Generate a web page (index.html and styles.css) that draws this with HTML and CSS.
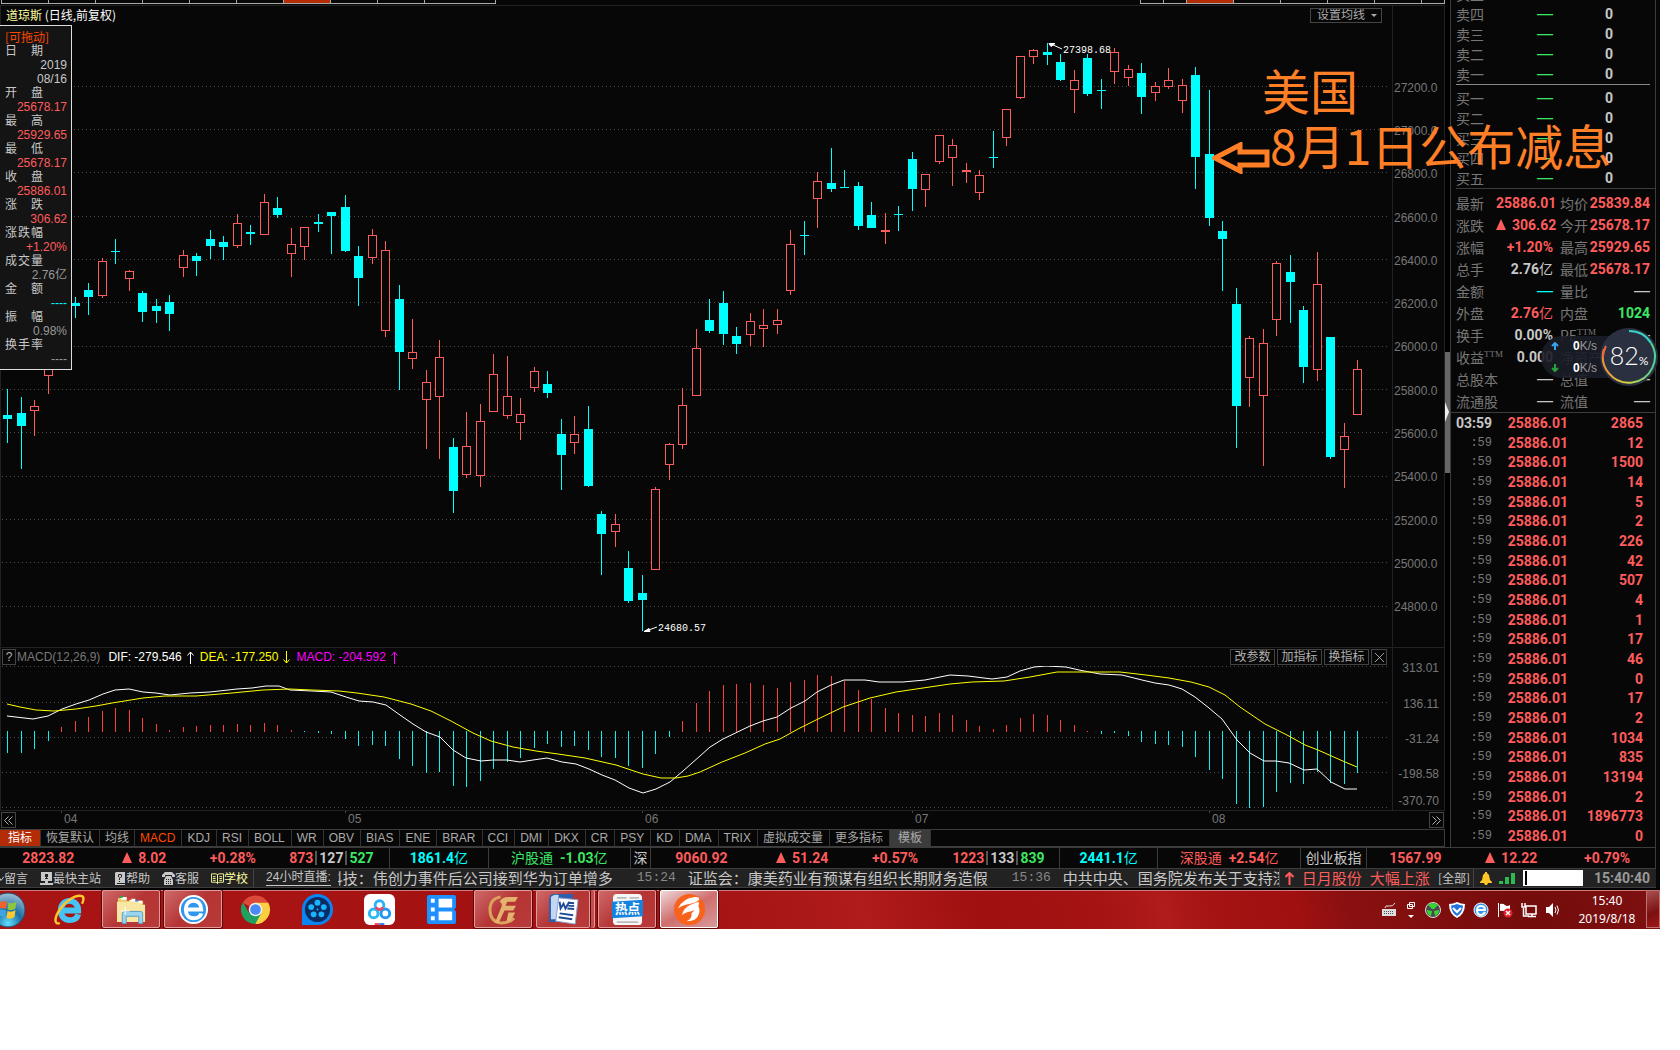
FILE: index.html
```html
<!DOCTYPE html>
<html lang="zh-CN">
  <head>
    <meta charset="UTF-8">
    <meta name="viewport" content="width=device-width, initial-scale=1.0">
    <title>道琼斯 日线</title>
    <link rel="stylesheet" href="styles.css">
    <script src="chart.js" defer></script>
  </head>
  <body>
    <div class="desktop">
      <div class="terminal">
        <main class="workspace">
          <div class="strip">
            <div class="strip-group">
              <i></i><i></i><i></i><i></i><i></i><i></i><i class="on"></i><i></i><i></i><i class="wide"></i>
            </div>
            <div class="strip-group">
              <i class="half"></i><i class="half"></i><i class="on"></i><i></i><i></i><i></i><i></i><i class="half"></i>
            </div>
          </div>

          <section class="pane price-pane">
            <div class="plot">
              <header class="plot-head">
                <h1><span class="symbol">道琼斯</span> (日线,前复权)</h1>
                <label class="ma-select">
                  <select aria-label="设置均线"><option>设置均线</option></select>
                </label>
              </header>
              <svg id="price" class="price-chart" viewBox="1 24 1391 623" preserveAspectRatio="none"></svg>
            </div>
            <ol class="price-axis">
              <li>27200.0</li><li>27000.0</li><li>26800.0</li><li>26600.0</li><li>26400.0</li>
              <li>26200.0</li><li>26000.0</li><li>25800.0</li><li>25600.0</li><li>25400.0</li>
              <li>25200.0</li><li>25000.0</li><li>24800.0</li>
            </ol>
          </section>

          <section class="pane macd-pane">
            <div class="plot">
              <header class="plot-head macd-head">
                <button class="box-btn help">?</button>
                <span class="name">MACD(12,26,9)</span>
                <span class="dif">DIF: -279.546</span>
                <svg class="arrow dif" viewBox="0 0 7 13"><path d="M3.500 13V1M.5 4.500l3-3.500 3 3.500"/></svg>
                <span class="dea">DEA: -177.250</span>
                <svg class="arrow dea" viewBox="0 0 7 13"><path d="M3.500 0v12M.5 8.500l3 3.500 3-3.500"/></svg>
                <span class="macd">MACD: -204.592</span>
                <svg class="arrow macd" viewBox="0 0 7 13"><path d="M3.500 13V1M.5 4.500l3-3.500 3 3.500"/></svg>
                <div class="plot-tools">
                  <button class="box-btn">改参数</button>
                  <button class="box-btn">加指标</button>
                  <button class="box-btn">换指标</button>
                  <button class="box-btn close" aria-label="关闭">
                    <svg viewBox="0 0 10 10"><path d="M0 0l10 10M10 0L0 10"/></svg>
                  </button>
                </div>
              </header>
              <svg id="macd" class="macd-chart" viewBox="1 0 1391 144" preserveAspectRatio="none">
                <g id="macd-bars"></g>
                <polyline class="line-dif" points="7,50 33,53 48,50 62,43 76,38 89,34 103,28 115,24 129,23 143,26 156,27 170,29 190,27 210,26 237,23 252,22 266,20 279,20 290,24 312,25 331,26 346,31 359,35 373,36 386,39 400,49 413,58 426,66 440,71 453,84 466,92 481,95 493,94 507,94 520,96 533,94 547,92 562,96 576,98 589,103 602,109 615,114 629,122 643,127 656,123 670,116 683,105 700,90 710,81 723,73 750,60 763,55 777,51 791,42 805,35 817,26 831,19 844,14 865,14 879,16 903,16 925,14 950,9 968,10 992,13 1007,11 1020,5 1034,1 1046,0 1066,1 1079,4 1100,8 1122,9 1142,14 1155,17 1169,19 1182,23 1195,31 1209,42 1222,53 1237,74 1250,87 1264,95 1276,95 1289,97 1304,104 1317,103 1331,116 1345,123 1357,123"/>
                <polyline class="line-dea" points="7,38 20,41 36,44 54,45 76,43 96,40 112,37 143,32 165,30 196,30 232,27 263,24 290,23 312,24 339,25 357,27 384,31 411,38 431,45 451,55 473,67 491,75 513,81 536,85 558,88 585,92 616,99 643,108 661,112 676,112 688,110 700,106 722,96 745,87 765,78 780,73 798,63 816,54 843,41 870,32 896,26 923,22 950,18 972,16 1004,15 1030,11 1057,6 1084,6 1120,6 1146,9 1169,12 1191,16 1209,21 1225,29 1240,41 1265,58 1287,69 1305,79 1318,84 1345,96 1357,101"/>
              </svg>
            </div>
            <ol class="macd-axis">
              <li>313.01</li><li>136.11</li><li>-31.24</li><li>-198.58</li><li>-370.70</li>
            </ol>
          </section>

          <div class="time-axis">
            <button class="box-btn" aria-label="向左"><svg viewBox="0 0 9 9"><path d="M4.500.5l-4 4 4 4M8.500.5l-4 4 4 4"/></svg></button>
            <svg class="months" viewBox="16 0 1413 18" preserveAspectRatio="none">
              <path d="M61.500 0v2M345.500 0v2M642.500 0v2M912.500 0v2M1209.500 0v2"/>
              <text x="64" y="12">04</text>
              <text x="348" y="12">05</text>
              <text x="645" y="12">06</text>
              <text x="915" y="12">07</text>
              <text x="1212" y="12">08</text>
            </svg>
            <button class="box-btn" aria-label="向右"><svg viewBox="0 0 9 9"><path d="M.5.5l4 4-4 4M4.500.5l4 4-4 4"/></svg></button>
          </div>

          <nav class="tabs">
            <button class="main">指标</button><button>恢复默认</button><button>均线</button><button class="current">MACD</button><button>KDJ</button><button>RSI</button><button>BOLL</button><button>WR</button><button>OBV</button><button>BIAS</button><button>ENE</button><button>BRAR</button><button>CCI</button><button>DMI</button><button>DKX</button><button>CR</button><button>PSY</button><button>KD</button><button>DMA</button><button>TRIX</button><button>虚拟成交量</button><button>更多指标</button><button class="template">模板</button>
          </nav>
        </main>

        <div class="splitter"><span class="thumb"></span></div>

        <aside class="quote">
          <div class="levels sell">
            <table>
              <tr><th>卖五</th><td class="dash down">—</td><td>0</td></tr>
              <tr><th>卖四</th><td class="dash down">—</td><td>0</td></tr>
              <tr><th>卖三</th><td class="dash down">—</td><td>0</td></tr>
              <tr><th>卖二</th><td class="dash down">—</td><td>0</td></tr>
              <tr><th>卖一</th><td class="dash down">—</td><td>0</td></tr>
            </table>
          </div>
          <div class="levels buy">
            <table>
              <tr><th>买一</th><td class="dash down">—</td><td>0</td></tr>
              <tr><th>买二</th><td class="dash down">—</td><td>0</td></tr>
              <tr><th>买三</th><td class="dash down">—</td><td>0</td></tr>
              <tr><th>买四</th><td class="dash down">—</td><td>0</td></tr>
              <tr><th>买五</th><td class="dash down">—</td><td>0</td></tr>
            </table>
          </div>
          <dl class="stats">
            <dt>最新</dt><dd class="up">25886.01</dd><dt>均价</dt><dd class="up">25839.84</dd>
            <dt>涨跌</dt><dd class="up"><i class="tri"></i>306.62</dd><dt>今开</dt><dd class="up">25678.17</dd>
            <dt>涨幅</dt><dd class="up">+1.20%</dd><dt>最高</dt><dd class="up">25929.65</dd>
            <dt>总手</dt><dd>2.76<small>亿</small></dd><dt>最低</dt><dd class="up">25678.17</dd>
            <dt>金额</dt><dd class="dash cyan">—</dd><dt>量比</dt><dd class="dash">—</dd>
            <dt>外盘</dt><dd class="up">2.76<small>亿</small></dd><dt>内盘</dt><dd class="down">1024</dd>
            <dt>换手</dt><dd>0.00%</dd><dt>PE<sup>TTM</sup></dt><dd class="dash">—</dd>
            <dt>收益<sup>TTM</sup></dt><dd>0.000</dd><dt>净资产</dt><dd>0.00</dd>
            <dt>总股本</dt><dd class="dash">—</dd><dt>总值</dt><dd class="dash">—</dd>
            <dt>流通股</dt><dd class="dash">—</dd><dt>流值</dt><dd class="dash">—</dd>
          </dl>
          <table class="ticks">
            <tr class="first"><th>03:59</th><td>25886.01</td><td>2865</td></tr>
            <tr><th>:59</th><td>25886.01</td><td>12</td></tr>
            <tr><th>:59</th><td>25886.01</td><td>1500</td></tr>
            <tr><th>:59</th><td>25886.01</td><td>14</td></tr>
            <tr><th>:59</th><td>25886.01</td><td>5</td></tr>
            <tr><th>:59</th><td>25886.01</td><td>2</td></tr>
            <tr><th>:59</th><td>25886.01</td><td>226</td></tr>
            <tr><th>:59</th><td>25886.01</td><td>42</td></tr>
            <tr><th>:59</th><td>25886.01</td><td>507</td></tr>
            <tr><th>:59</th><td>25886.01</td><td>4</td></tr>
            <tr><th>:59</th><td>25886.01</td><td>1</td></tr>
            <tr><th>:59</th><td>25886.01</td><td>17</td></tr>
            <tr><th>:59</th><td>25886.01</td><td>46</td></tr>
            <tr><th>:59</th><td>25886.01</td><td>0</td></tr>
            <tr><th>:59</th><td>25886.01</td><td>17</td></tr>
            <tr><th>:59</th><td>25886.01</td><td>2</td></tr>
            <tr><th>:59</th><td>25886.01</td><td>1034</td></tr>
            <tr><th>:59</th><td>25886.01</td><td>835</td></tr>
            <tr><th>:59</th><td>25886.01</td><td>13194</td></tr>
            <tr><th>:59</th><td>25886.01</td><td>2</td></tr>
            <tr><th>:59</th><td>25886.01</td><td>1896773</td></tr>
            <tr><th>:59</th><td>25886.01</td><td>0</td></tr>
          </table>
        </aside>
      </div>

      <div class="indices">
        <div class="index board">
          <span class="up">2823.82</span>
          <span class="up"><i class="tri"></i>8.02</span>
          <span class="up">+0.28%</span>
          <span><b class="up">873</b><i class="bar"></i>127<i class="bar"></i><b class="down">527</b></span>
        </div>
        <div class="index amount cyan">1861.4<small>亿</small></div>
        <div class="index connect down"><small>沪股通</small>&nbsp; -1.03<small>亿</small></div>
        <div class="index short"><small>深</small></div>
        <div class="index board shenzhen">
          <span class="up">9060.92</span>
          <span class="up"><i class="tri"></i>51.24</span>
          <span class="up">+0.57%</span>
          <span><b class="up">1223</b><i class="bar"></i>133<i class="bar"></i><b class="down">839</b></span>
        </div>
        <div class="index amount cyan">2441.1<small>亿</small></div>
        <div class="index connect up"><small>深股通</small>&nbsp; +2.54<small>亿</small></div>
        <div class="index label"><small>创业板指</small></div>
        <div class="index growth">
          <span class="up">1567.99</span>
          <span class="up"><i class="tri"></i>12.22</span>
          <span class="up">+0.79%</span>
        </div>
      </div>

      <div class="newsbar">
        <div class="links">
          <a href="#"><svg class="clip" viewBox="0 0 4 12"><path d="M0 6l1 2 3-4" fill="none" stroke="currentColor"/></svg>留言</a>
          <a href="#"><svg viewBox="0 0 13 13"><path fill="currentColor" fill-rule="evenodd" d="M1 0h11v9H8v2h5v2H0v-2h5V9H1zM5 2v3h1v1H5v1h3V6H7V5h1V2z"/></svg>最快主站</a>
          <a href="#"><svg viewBox="0 0 13 13"><path fill="currentColor" fill-rule="evenodd" d="M3 0h9v11H4v1h8v1H2V1zM5 3v2h1V3h2v2H7L6 6v2h1V6l2-1V3L8 2H6zM6 9v1h1V9z"/></svg>帮助</a>
          <a href="#"><svg viewBox="0 0 13 13"><path fill="currentColor" d="M0 3l3-3h7l3 3v2h-3V3H3v2H0zM4 4h5l2 4v5H2V8z"/><path stroke="#222" stroke-dasharray="1 1" d="M4 7.500h5M4 9.500h5M4 11.500h5"/></svg>客服</a>
          <a href="#" class="school"><svg viewBox="0 0 14 13"><path fill="none" stroke="currentColor" d="M.5 1.500h5l1.500 1 1.500-1h5v9h-5L7 12l-1.500-1.500h-5zM7 2v10M2 4.500h3M2 6.500h3M2 8.500h3M9 4.500h3M9 6.500h3M9 8.500h3"/></svg>学校</a>
        </div>
        <div class="news">
          <a href="#" class="live">24小时直播:</a>
          <div class="marquee">
            <span class="item lead">科技：伟创力事件后公司接到华为订单增多</span>
            <time>15:24</time>
            <span class="item">证监会：康美药业有预谋有组织长期财务造假</span>
            <time>15:36</time>
            <span class="item">中共中央、国务院发布关于支持深圳</span>
          </div>
        </div>
        <div class="alert">
          <svg viewBox="0 0 9 13"><path d="M4.500 13V1M.5 5l4-4 4 4" fill="none" stroke="currentColor" stroke-width="2"/></svg>
          <span>日月股份</span><span>大幅上涨</span>
          <a href="#">[全部]</a>
        </div>
        <div class="status">
          <svg class="bell" viewBox="0 0 12 13"><path fill="#ffc629" d="M5 0h2v1l2 2 1 5 2 2v1H0v-1l2-2 1-5 2-2zM4 11h4l-1 2H5z"/></svg>
          <svg class="signal" viewBox="0 0 17 12"><path fill="#2cbb52" d="M0 9h4v3H0zM6 5h4v7H6zM12 1h4v11h-4z"/></svg>
          <input type="text" aria-label="搜索">
          <time>15:40:40</time>
        </div>
      </div>

      <footer class="taskbar">
        <button class="orb" aria-label="开始">
          <svg viewBox="0 0 36 36">
            <defs><radialGradient id="orb" cx=".5" cy=".9" r=".9"><stop offset="0" stop-color="#5fe0ff"/><stop offset=".45" stop-color="#1c6ea4"/><stop offset="1" stop-color="#9fc0d6"/></radialGradient></defs>
            <circle cx="18" cy="18" r="17" fill="url(#orb)" stroke="#244a66"/>
            <path fill="#f0622d" d="M9 11q4-3 8-1l-1 7q-4-2-8 0z"/><path fill="#8cc63e" d="M18.500 10.500q4 2 8-1l-1 7q-4 3-8 1z"/>
            <path fill="#3fa4e0" d="M8 18.500q4-2 8 0l-1 7q-4-3-8 0z"/><path fill="#fcc92e" d="M17.500 19q4 2 8-1l-1 7q-4 3-8 1z"/>
          </svg>
        </button>
        <div class="tasks">
          <button aria-label="Internet Explorer">
            <svg viewBox="0 0 32 32"><path fill="none" stroke="#46c4f3" stroke-width="6" d="M25 21c-1 4-4 6-9 6-5 0-9-4-9-10s4-10 9-10 9 4 9 10H10"/><path fill="none" stroke="#ffc62b" stroke-width="2.500" d="M6 30c-6 2-6-5 0-14S22 1 28 2c3 0 3 4 1 8"/></svg>
          </button>
          <button class="open" aria-label="资源管理器">
            <svg viewBox="0 0 32 32"><path fill="#e9ca6b" d="M2 4h9v3h17v22H2z"/><path fill="#fff" d="M5 3h6v3H5zM14 5h6v3h-6zM21 7h6v3h-6z"/><path fill="#1fae3a" d="M4 2h3v2H4z"/><path fill="#e33a22" d="M13 4h3v2h-3z"/><path fill="#2f87e0" d="M20 6h3v2h-3z"/><path fill="#f8e7a2" d="M1 8h22l3 3h4v18H1z"/><path fill="#9bd4ee" stroke="#5b9fc4" d="M6.500 30.500V20q0-2 2-2h17q2 0 2 2v10.500h-4V23h-13v7.500z"/><path stroke="#fff" d="M9.500 13v8M5 17.500h9"/></svg>
          </button>
          <button class="open" aria-label="浏览器">
            <svg viewBox="0 0 32 32"><circle cx="16" cy="16" r="15" fill="#fff"/><circle cx="16" cy="16" r="13" fill="#2f97ee"/><path fill="none" stroke="#fff" stroke-width="4" d="M24 20c-1 4-4 5-8 5-5 0-8-4-8-9s3-9 8-9 8 4 8 9H9"/></svg>
          </button>
          <button aria-label="Chrome">
            <svg viewBox="0 0 32 32"><path fill="#de4a3a" d="M16 16L3 9a15 15 0 0 1 26 0z"/><path fill="#fcce41" d="M16 16V9h13.300A15 15 0 0 1 16 31z"/><path fill="#1da262" d="M3 8.500L16 31A15 15 0 0 1 3 8.500z"/><path fill="#1da262" d="M9 19l7 2 6-1-6 11z"/><path fill="#fcce41" d="M22 20l-6 11 5-1 6-8z"/><circle cx="16" cy="16" r="7" fill="#f1f1f1"/><circle cx="16" cy="16" r="5.500" fill="#4a8af4"/></svg>
          </button>
          <button aria-label="影音">
            <svg viewBox="0 0 32 32"><path fill="#0a86f2" d="M0 32V16A16 16 0 1 1 16 32z"/><circle cx="16" cy="16" r="13" fill="#0b2c63"/><g fill="#18b4ff"><circle cx="16" cy="9" r="3"/><circle cx="22.500" cy="13.500" r="3"/><circle cx="20" cy="21" r="3"/><circle cx="12" cy="21" r="3"/><circle cx="9.500" cy="13.500" r="3"/><circle cx="16" cy="16" r="1"/></g></svg>
          </button>
          <button aria-label="网盘">
            <svg viewBox="0 0 32 32"><rect width="32" height="32" rx="6" fill="#fff"/><g fill="none" stroke-width="3"><circle cx="10" cy="20" r="4.500" stroke="#28b9f5"/><circle cx="22" cy="20" r="4.500" stroke="#2196f3"/><circle cx="16" cy="11.500" r="4.500" stroke="#2ab4f6"/><path stroke="#ea4b66" d="M12 14q4 4 8 0"/></g><path fill="#f0455f" d="M11 30h5v2h-5z"/><path fill="#2d7df0" d="M16 30h5v2h-5z"/></svg>
          </button>
          <button aria-label="视频">
            <svg viewBox="0 0 32 32"><path fill="#1e90ff" d="M1 3q0-2 2-2h26q2 0 2 2v11l-2 2 2 2v11q0 2-2 2H3q-2 0-2-2z"/><path fill="#fff" d="M5 5h4v4H5zM5 14h4v4H5zM5 23h4v4H5zM13 5h14v9H13zM13 18h14v9H13z"/></svg>
          </button>
          <button class="open" aria-label="理财">
            <svg viewBox="0 0 32 32"><path fill="none" stroke="#d9a35a" stroke-width="3" d="M13 3Q2 5 2 16q0 13 12 14 8 0 13-5"/><path fill="#e3b26c" d="M12 8q2-5 9-5h10l-3 5h-8l-2 4h11l-3 5h-9l-6 13H7l7-17q1-4-2-5zM21 19h7l-4 8-5 2z"/></svg>
          </button>
          <button class="open stacked" aria-label="Word">
            <svg viewBox="0 0 32 32"><path fill="#2d5fae" d="M4 0h22l-3 29H1V8q0-6 3-8z"/><path fill="#c3d6f2" d="M3 3q3-3 8-2L9 26H3z"/><path fill="#fff" stroke="#8aa3cc" d="M11 4l20 2-3 25-20-3z"/><g fill="none" stroke="#1f4a96" stroke-width="2"><path d="M12 8l1 7 3-5 2 5 4-7M22 9l5 .5M21 12l6 .5M20 15l7 .5M12 20l14 2M11 24l14 2"/></g></svg>
          </button>
          <button class="open" aria-label="热点">
            <svg viewBox="0 0 32 32"><rect x="1" width="30" height="32" rx="4" fill="#f6f6f6"/><path fill="#bcbcbc" d="M5 3h10v2H5zM18 3h10v2H18zM5 28h22v2H5z"/><path fill="#1583dd" d="M0 8l32-2v17l-32 2z"/><text class="hot" x="16" y="20">热点</text></svg>
          </button>
          <button class="open active" aria-label="行情">
            <svg viewBox="0 0 32 32"><circle cx="16" cy="16" r="16" fill="#f9621a"/><path fill="#fff" d="M4 15Q9 4 22 3q5 0 4 3-3 3-9 4-8 1-13 5zM8 22q2-8 9-11l8-3q2 2-1 6-2 3-7 4-6 1-9 4zM13 28q6-3 5-8l7-8q3 6-1 12-3 4-11 4z"/></svg>
          </button>
        </div>
        <div class="tray">
          <svg viewBox="0 0 16 16"><path fill="#ddd" d="M1 7h14v7H1z"/><path stroke="#555" stroke-dasharray="1 1" d="M3 9.500h10M3 11.500h10"/><path fill="none" stroke="#ddd" d="M4 6q0-3 4-2t6-3"/></svg>
          <svg class="slim" viewBox="0 0 8 18"><path fill="none" stroke="#fff" d="M2.500 1.500h5v4h-5zM.5 3.500h5v4h-5z"/><path fill="#fff" d="M1 14h6l-3 3z"/></svg>
          <svg viewBox="0 0 16 16"><circle cx="8" cy="8" r="7.500" fill="#4a4a4a" stroke="#ddd"/><path fill="#35d435" d="M7 7L3 3q5-4 10 0L9 7zM7 9l-5-1q0 5 4 6zM9 9l5-1q0 5-4 6z"/></svg>
          <svg viewBox="0 0 16 16"><path fill="#fff" d="M8 0q4 2 8 2 0 10-8 14Q0 12 0 2q4 0 8-2z"/><path fill="#2273e0" d="M8 2q3 1 6 1.500Q13.500 11 8 14 2.500 11 2 3.500 5 3 8 2z"/><path fill="none" stroke="#fff" stroke-width="2" d="M4 6l4 4 4-4"/></svg>
          <svg viewBox="0 0 16 16"><circle cx="8" cy="8" r="7" fill="#2f97ee" stroke="#fff"/><path fill="none" stroke="#fff" stroke-width="2" d="M12 10c-1 2-2 3-4 3-3 0-4-2-4-5s2-4 4-4 4 1 4 4H4"/></svg>
          <svg viewBox="0 0 16 16"><path fill="#fff" d="M1 1h1v14H1zM3 2q3-1 5 1t5 0v7q-3 2-5 0T3 9z"/><circle cx="11" cy="11" r="4.500" fill="#e2202c"/><path stroke="#fff" stroke-width="1.500" d="M9 9l4 4M13 9l-4 4"/></svg>
          <svg viewBox="0 0 16 16"><path fill="none" stroke="#fff" stroke-width="1.500" d="M5 4h10v8H5zM2.500 6v8H8M1 1v4h3V1M11 12v2M7 14.500h8"/></svg>
          <svg viewBox="0 0 16 16"><path fill="#fff" d="M1 5h3l4-4v14l-4-4H1z"/><path fill="none" stroke="#fff" d="M10 5q2 3 0 6M12 3.500q3 4.500 0 9"/></svg>
        </div>
        <time class="clock"><span>15:40</span><span>2019/8/18</span></time>
        <button class="show-desktop" aria-label="显示桌面"></button>
      </footer>

      <dl class="info">
        <div class="grip">[可拖动]</div>
        <dt>日 期</dt><dd class="date">2019<br>08/16</dd>
        <dt>开 盘</dt><dd class="up">25678.17</dd>
        <dt>最 高</dt><dd class="up">25929.65</dd>
        <dt>最 低</dt><dd class="up">25678.17</dd>
        <dt>收 盘</dt><dd class="up">25886.01</dd>
        <dt>涨 跌</dt><dd class="up">306.62</dd>
        <dt>涨跌幅</dt><dd class="up">+1.20%</dd>
        <dt>成交量</dt><dd>2.76亿</dd>
        <dt>金 额</dt><dd class="cyan">----</dd>
        <dt>振 幅</dt><dd>0.98%</dd>
        <dt>换手率</dt><dd>----</dd>
      </dl>

      <div class="note">
        <p>美国</p>
        <p class="second">8月1日公布减息</p>
        <svg viewBox="0 0 58 32"><path d="M3 16L28 3v7h27v13H28v6z"/></svg>
      </div>

      <div class="net">
        <div class="rates">
          <span><svg viewBox="0 0 8 8"><path stroke="#38a3e8" d="M4 8V1M1 4l3-3 3 3"/></svg><b>0</b>K/s</span>
          <span><svg viewBox="0 0 8 8"><path stroke="#2aa336" d="M4 0v7M1 4l3 3 3-3"/></svg><b>0</b>K/s</span>
        </div>
        <div class="gauge">
          <svg viewBox="0 0 60 60">
            <defs><linearGradient id="ring" x1="0" y1="0" x2="1" y2="0"><stop offset="0" stop-color="#f0913c"/><stop offset=".45" stop-color="#d8d23c"/><stop offset="1" stop-color="#4cd39a"/></linearGradient></defs>
            <circle cx="30" cy="30" r="29" fill="#2b3040"/>
            <path fill="none" stroke="#37d3c4" stroke-width="2" d="M30 4a26 26 0 0 1 22 12"/>
            <path fill="none" stroke="url(#ring)" stroke-width="2" d="M52 16A26 26 0 1 1 5 22"/>
            <path fill="none" stroke="#f0633c" stroke-width="2" d="M4 30A26 26 0 0 1 7 19"/>
          </svg>
          <strong>82<small>%</small></strong>
        </div>
      </div>
    </div>
  </body>
</html>
```
FILE: styles.css
```css
*,
*::after,
*::before {
  box-sizing: border-box;
}

:root {
  --cjk: "Noto Sans CJK SC", sans-serif;
  --text: "Liberation Sans", "Noto Sans CJK SC", sans-serif;
  --num: Roboto, "Noto Sans CJK SC", sans-serif;
  --mono: "Liberation Mono", "Noto Sans CJK SC", monospace;
  --up: #ff5c5c;
  --down: #3de663;
  --cyan: #00ffff;
  --edge: #222;
  --line: #3c3c3c;
}

body {
  margin: 0;
  padding-right: 20px;
  background: #fff;
  font: 12px/14px var(--text);
  color: #c8c8c8;
}

button,
input,
select {
  font: inherit;
  color: inherit;
  margin: 0;
  padding: 0;
  border: 0;
  border-radius: 0;
  background: none;
}

dl,
dd,
ol,
p,
h1 {
  margin: 0;
  padding: 0;
}

ol {
  list-style: none;
}

a {
  color: inherit;
  text-decoration: none;
}

svg {
  display: block;
}

i {
  font-style: normal;
}

.up { color: var(--up); }
.down { color: var(--down); }
.cyan { color: var(--cyan); }

.desktop {
  position: relative;
  background: #070707;
}

.terminal {
  display: grid;
  grid-template-columns: 1fr 5px 206px;
  padding-right: 4px;
}

/* Cut-off period tabs */
.strip {
  display: flex;
  justify-content: space-between;
  height: 5px;
  padding: 0 0 1px 1px;
}

.strip-group {
  display: flex;
  border-left: 1px solid #aaa;
}

.strip-group i {
  width: 47px;
  border: 1px solid #aaa;
  border-width: 0 1px 1px 0;
}

.strip-group .half { width: 23px; }
.strip-group .wide { width: 71px; }
.strip-group .on { background: #b42c06; }

/* Chart panes */
.pane {
  display: grid;
  grid-template-columns: 1fr 52px;
  border: 1px solid var(--edge);
  border-bottom: 0;
}

.plot-head {
  display: flex;
  align-items: center;
  height: 18px;
  padding: 0 10px 0 5px;
}

.plot-head h1 {
  flex: 1;
  font: 12px/14px var(--cjk);
  color: #fff;
}

.plot-head .symbol {
  color: #ffffa0;
}

.ma-select {
  position: relative;
  border: 1px solid #444;
}

.ma-select select {
  appearance: none;
  display: block;
  width: 70px;
  height: 13px;
  padding: 0 0 0 6px;
  line-height: 13px;
  color: #aaa;
}

.ma-select::after {
  content: "";
  position: absolute;
  right: 4px;
  top: 5px;
  border: 3px solid transparent;
  border-top-color: #aaa;
}

.price-chart {
  width: 100%;
  height: 623px;
}

.macd-chart {
  width: 100%;
  height: 144px;
}

.price-chart line,
.macd-chart line {
  stroke: #4e4e4e;
  stroke-dasharray: 1 3;
}

.price-chart rect,
.macd-chart rect,
.price-chart line,
.macd-chart line,
.months path {
  shape-rendering: crispEdges;
}

.body-up {
  stroke: var(--up);
  fill: #070707;
}

.wick-up { fill: var(--up); }

.body-down,
.wick-down {
  fill: var(--cyan);
}

.bar-up { fill: #ff3c3c; }
.bar-down { fill: #0cf0f0; }

.price-chart text {
  font: 10px var(--mono);
  fill: #fff;
}

.price-chart .pointer {
  fill: #fff;
  stroke: #fff;
}

.line-dif,
.line-dea {
  fill: none;
  stroke: #fff;
}

.line-dea {
  stroke: #ff0;
}

.price-axis,
.macd-axis {
  display: grid;
  grid-auto-rows: 1fr;
  align-items: center;
  border-left: 1px solid var(--edge);
  color: #777;
}

.price-axis {
  padding: 60px 0 18px 1px;
}

.macd-axis {
  grid-template-rows: 36px 36px 34px 36px 18px;
  align-content: start;
  padding: 2px 5px 0 0;
  text-align: right;
}

.macd-head {
  padding: 0 5px 0 1px;
}

.macd-head .name {
  margin: 0 8px 0 1px;
  color: #777;
}

.macd-head .dif { color: #fff; }
.macd-head .dea { color: #ff0; }
.macd-head .macd { color: #f0f; }

.arrow {
  width: 7px;
  height: 13px;
  margin: 0 6px 0 5px;
  fill: none;
  stroke: currentColor;
}

.plot-tools {
  display: flex;
  gap: 2px;
  margin-left: auto;
}

.box-btn {
  display: grid;
  place-items: center;
  height: 16px;
  border: 1px solid #444;
  line-height: 14px;
  color: #b0b0b0;
}

.plot-tools .box-btn {
  width: 45px;
}

.box-btn.help {
  width: 14px;
}

.plot-tools .close {
  width: 16px;
}

.box-btn svg {
  width: 9px;
  height: 9px;
  fill: none;
  stroke: currentColor;
}

.time-axis {
  display: grid;
  grid-template-columns: 15px 1fr 15px;
  height: 19px;
  padding: 0 1px;
  border-top: 1px solid var(--edge);
}

.time-axis .box-btn {
  margin-top: 1px;
}

.months {
  width: 100%;
  height: 18px;
  font: 12px var(--text);
  fill: #777;
}

.months path {
  stroke: #444;
}

.tabs {
  display: flex;
  height: 18px;
  border: 1px solid var(--line);
  border-left: 0;
}

.tabs button {
  padding: 0 5px;
  border-right: 1px solid #333;
  line-height: 16px;
  color: #aaa;
}

.tabs .current,
.tabs .current ~ button {
  padding-right: 6px;
}

.tabs .main {
  padding: 0 8px;
  background: #b42c06;
  color: #fff;
}

.tabs .current {
  color: #ff4800;
}

.tabs .current ~ .template {
  padding: 0 8px;
  background: #3c3c3c;
}

.splitter {
  position: relative;
  background: #000;
}

.splitter .thumb {
  position: absolute;
  top: 352px;
  width: 100%;
  height: 121px;
  background: #666;
}

.splitter .thumb::after {
  content: "";
  position: absolute;
  left: 0;
  top: 50px;
  border: 10px solid transparent;
  border-width: 10px 0 10px 4px;
  border-left-color: #eee;
}

/* Quote column */
.quote {
  display: grid;
  grid-template-rows: 85px 104px 224px 1fr;
  border: 1px solid var(--line);
  border-width: 0 1px;
}

.levels {
  display: flex;
  flex-direction: column;
  justify-content: flex-end;
  overflow: hidden;
  margin: 0 5px;
}

.sell {
  border-bottom: 1px solid #888;
}

.buy {
  margin-right: 0;
  border-bottom: 1px solid var(--line);
}

.quote table {
  border-collapse: collapse;
  table-layout: fixed;
  width: 157px;
  font: bold 14px/18px var(--num);
}

.quote td,
.quote th {
  padding: 0;
  text-align: right;
}

.levels tr {
  height: 20px;
}

.levels th {
  width: 50px;
  font: 14px/18px var(--cjk);
  color: #777;
}

.quote .levels th {
  text-align: left;
}

.levels td {
  width: 60px;
}

.levels td:nth-child(2) {
  width: 47px;
}

.stats {
  display: grid;
  grid-template-columns: 40px 57px 7px 27px 63px;
  grid-auto-rows: 22px;
  align-items: center;
  padding: 3px 5px 0;
  border-bottom: 1px solid var(--line);
  font: bold 14px/20px var(--num);
}

.stats dt {
  font: 14px/20px var(--cjk);
  color: #777;
  white-space: nowrap;
}

.stats dt:nth-of-type(even) {
  grid-column: 4;
}

.stats dd {
  text-align: right;
  white-space: nowrap;
}

.quote .dash {
  font: 16px/18px var(--text);
}

.stats sup {
  font: 9px/10px "Liberation Serif", serif;
  vertical-align: 6px;
}

small {
  font: 14px/14px var(--cjk);
}

.tri {
  display: inline-block;
  margin-right: 6px;
  border: 5px solid transparent;
  border-width: 0 5px 11px;
  border-bottom-color: currentColor;
}

.quote .ticks {
  width: 187px;
  height: 433px;
  margin-left: 5px;
  color: var(--up);
}

.ticks th {
  width: 36px;
  font: 12px/18px var(--mono);
  color: #777;
}

.ticks .first th {
  font: bold 14px/18px var(--num);
  color: #c8c8c8;
}

.ticks td:nth-child(2) {
  width: 76px;
}

/* Index bar */
.indices {
  display: flex;
  height: 22px;
  margin-right: 4px;
  border: 1px solid var(--line);
  border-left: 0;
  font: bold 14px/20px var(--num);
  text-align: center;
  white-space: nowrap;
}

.index {
  border-left: 1px solid var(--line);
}

.index:first-child {
  border-left: 0;
}

.board {
  display: grid;
  grid-template-columns: 97fr 96fr 82fr 116fr;
  flex: 391;
}

.shenzhen {
  flex: 410;
}

.board b {
  font-weight: bold;
}

.index .bar {
  display: inline-block;
  width: 2px;
  height: 14px;
  margin: 0 2px;
  background: #555;
  vertical-align: -2px;
}

.amount { flex: 98; }
.connect { flex: 142; }
.short { flex: 19; }
.label { flex: 66; }

.growth {
  display: grid;
  grid-template-columns: 1fr 1fr 1fr;
  flex: 289;
}

/* News bar */
.newsbar {
  display: flex;
  height: 19px;
  margin-right: 4px;
  border-bottom: 1px solid var(--line);
  background: #222;
  line-height: 18px;
}

.links {
  display: flex;
  gap: 12px;
  padding-right: 5px;
  border-right: 1px solid #444;
  font-family: var(--cjk);
}

.links a {
  display: flex;
  align-items: center;
}

.links svg {
  width: 13px;
  height: 13px;
}

.links .clip {
  width: 4px;
}

.links .school {
  color: #ffffa0;
}

.news {
  display: flex;
  flex: 1;
  min-width: 0;
  padding-left: 12px;
}

.live {
  height: 17px;
  margin-right: 7px;
  border-bottom: 1px solid #c8c8c8;
  line-height: 17px;
  white-space: nowrap;
}

.marquee {
  display: flex;
  flex: 1;
  gap: 12px;
  overflow: hidden;
  white-space: nowrap;
}

.marquee .item {
  font: 15px/18px var(--cjk);
}

.marquee .lead {
  margin: 0 12px 0 -10px;
}

.marquee time {
  font: 13px/18px var(--mono);
  color: #888;
}

.marquee .item + time:not(:nth-child(2)) {
  margin-left: 12px;
}

.alert {
  display: flex;
  align-items: center;
  gap: 8px;
  padding: 0 3px 0 5px;
  border: 1px solid #444;
  border-width: 0 1px;
  font: 15px/18px var(--cjk);
  color: var(--up);
}

.alert svg {
  width: 9px;
  height: 13px;
}

.alert a {
  font-size: 12px;
  color: #c8c8c8;
}

.status {
  display: flex;
  align-items: center;
  gap: 7px;
  width: 182px;
  padding: 0 6px;
}

.bell {
  width: 12px;
  height: 13px;
}

.signal {
  width: 17px;
  height: 12px;
}

.status input {
  width: 60px;
  height: 16px;
  border-left: 2px solid #fff;
  background: linear-gradient(#000, #000) 0 center / 2px 14px no-repeat #fff;
}

.status time {
  margin-left: auto;
  font: bold 14px/18px var(--num);
  color: #999;
}

/* Taskbar */
.taskbar {
  display: flex;
  height: 41px;
  padding-left: 40px;
  border-top: 2px solid #000;
  background: linear-gradient(75deg, #a81414 0 18%, #a01010 34%, #a81616 46%, #b01b1b 52%, #a01010 59%, #a51313 66%, #b01b1b 70%, #a51313 73%, #a01010 78%, #8a1010 81%, #740c0c 92%, #7e1010);
  box-shadow: inset 0 1px #d37b7b;
  position: relative;
  overflow: hidden;
}

.orb {
  position: absolute;
  left: -10px;
  top: 2px;
}

.orb svg {
  width: 36px;
  height: 36px;
}

.tasks {
  display: flex;
  flex: 1;
  gap: 4px;
}

.tasks button {
  display: grid;
  place-items: center;
  width: 58px;
  height: 38px;
}

.tasks svg {
  width: 31px;
  height: 31px;
}

.tasks .open {
  border: 1px solid #e29a9a;
  border-radius: 2px;
  background: linear-gradient(135deg, #cf6a6a, #b53434 50%, #b93a3a);
  box-shadow: 0 0 0 1px #5c0808;
}

.tasks .stacked {
  width: 54px;
  margin-right: 4px;
  box-shadow: 1px 0 #5c0808, 4px 0 #c05050, 5px 0 #e29a9a;
}

.tasks .active {
  border-color: #fff;
  background: linear-gradient(150deg, #f0d8d8, #cf6e6e 50%, #d99a9a);
}

.hot {
  font: bold 13px var(--cjk);
  fill: #fff;
  text-anchor: middle;
}

.tray {
  display: flex;
  align-items: center;
  gap: 8px;
}

.tray svg {
  width: 16px;
  height: 16px;
}

.tray .slim {
  width: 8px;
  height: 18px;
  margin: 0 2px;
}

.clock {
  display: flex;
  flex-direction: column;
  justify-content: center;
  width: 85px;
  padding-left: 7px;
  font: 12px/18px "Noto Sans", sans-serif;
  color: #fff;
  text-align: center;
}

.show-desktop {
  width: 14px;
  height: 38px;
  border: 1px solid #c07070;
  background: linear-gradient(160deg, #a85050, #7c1010 60%, #a01818);
}

/* Floating data window */
.info {
  position: absolute;
  left: 0;
  top: 25px;
  width: 72px;
  height: 345px;
  padding: 4px 4px 0 5px;
  border: 1px solid #ddd;
  border-left: 0;
  background: #141414;
}

.info .grip {
  font: 12px/14px var(--cjk);
  color: #ff4800;
}

.info dt {
  width: 38px;
  font: 12px/12px var(--cjk);
  text-align-last: justify;
}

.info dd {
  padding-top: 2px;
  text-align: right;
}

.info dd:not([class]) {
  color: #999;
}

/* Drawn note over the chart */
.note {
  position: absolute;
  left: 1262px;
  top: 62px;
  font: 48px/55px var(--cjk);
  color: #ff7f27;
  white-space: nowrap;
}

.note .second {
  padding-left: 8px;
}

.note svg {
  position: absolute;
  left: -50px;
  top: 80px;
  width: 58px;
  height: 32px;
  fill: none;
  stroke: #ff7f27;
  stroke-width: 5;
}

/* Network speed widget */
.net {
  position: absolute;
  left: 1541px;
  top: 327px;
  display: flex;
  align-items: center;
}

.rates {
  display: grid;
  gap: 4px;
  width: 76px;
  height: 42px;
  padding: 1px 0 1px 10px;
  border-radius: 21px 0 0 21px;
  background: rgba(27, 29, 40, .9);
  color: #999;
}

.rates span {
  display: flex;
  align-items: center;
}

.rates b {
  margin-left: 14px;
  font-weight: bold;
  color: #fff;
}

.rates svg {
  width: 8px;
  height: 8px;
  fill: none;
  stroke-width: 2;
}

.gauge {
  position: relative;
  width: 60px;
  height: 60px;
  margin-left: -18px;
}

.gauge strong {
  position: absolute;
  inset: 0;
  font: 300 25px/56px Lato, sans-serif;
  color: #fff;
  text-align: center;
}

.gauge small {
  font: 12px Lato, sans-serif;
}
```
FILE: chart.js
```js
// direction, high, body top, body bottom, low
const candles = `
d 389 415 419 443|d 397 413 426 469|u 400 406 411 436|u 350 358 376 394|u 310 318 330 340
d 297 303 306 318|d 283 290 297 315|u 258 261 296 298|d 239 251 252 264|u 270 271 279 291
d 291 293 312 322|d 299 306 311 323|d 295 302 314 331|u 250 255 268 277|d 253 256 261 276
d 230 239 246 259|d 236 242 247 260|u 214 223 246 248|d 225 232 234 245|u 194 202 235 235
d 197 208 215 218|u 228 244 254 277|u 227 227 247 260|d 214 222 224 232|d 212 212 216 254
d 195 207 251 252|d 246 256 278 306|u 229 235 258 264|u 241 250 331 337|d 285 299 352 390
u 319 352 359 369|u 370 382 400 449|u 340 357 397 459|d 438 447 491 513|u 412 446 475 478
u 404 421 476 487|u 354 374 412 412|u 356 396 416 419|u 398 414 423 440|u 367 371 388 392
d 371 384 393 398|d 419 434 455 490|u 416 434 443 454|d 406 429 486 487|d 511 514 534 575
u 514 524 532 547|d 551 568 601 603|d 575 593 600 631|u 487 489 570 570|u 443 444 465 480
u 388 405 445 449|u 329 348 396 396|d 299 320 331 333|d 291 303 334 345|d 327 336 344 354
u 313 321 335 346|u 309 325 329 347|u 309 320 325 334|u 230 244 291 295|d 221 235 236 255
u 172 181 199 228|d 148 183 189 192|d 170 187 188 188|d 182 186 226 230|d 202 215 228 228
u 213 230 232 244|d 206 214 215 231|d 152 159 189 211|u 174 174 190 207|u 135 135 162 164
u 139 145 158 186|u 163 170 172 183|u 170 175 193 200|d 131 157 158 168|u 109 109 138 146
u 56 56 98 99|u 49 50 57 64|d 43 52 55 65|d 54 62 80 81|u 70 80 90 113
d 54 58 94 96|d 79 90 91 109|u 48 52 72 84|u 65 69 78 86|d 63 73 97 114
u 82 86 93 101|u 68 80 87 89|u 79 85 101 113|d 67 75 157 189|d 90 154 218 226
d 221 231 239 291|d 288 304 406 448|u 336 338 378 407|u 329 343 396 466|u 261 263 320 336
d 255 272 282 323|d 306 310 367 383|u 252 284 370 381|d 337 337 457 459|u 423 436 450 488
u 360 369 415 415`.trim().split(/[\n|]/).map(row => row.split(' '));

const bars = [
  -22, -22, -18, -10, 5, 11, 15, 21, 24, 22, 14, 8, 2, 5, 6, 7, 7, 8, 7, 9,
  7, 2, -1, -2, -3, -8, -15, -14, -15, -28, -35, -42, -41, -55, -56, -50, -38, -31, -27, -17,
  -13, -16, -15, -19, -26, -27, -35, -37, -23, -6, 11, 29, 41, 47, 48, 49, 47, 44, 50, 52,
  57, 56, 51, 42, 33, 24, 19, 17, 16, 19, 17, 12, 6, 3, 7, 14, 18, 17, 12, 7,
  1, -3, -2, -5, -11, -13, -14, -16, -26, -39, -48, -73, -77, -76, -61, -52, -53, -41, -52, -53,
  -42
];

const column = i => Math.ceil(7 + 13.5 * i);
const grid = rows => rows.map(y => `<line x1="2" x2="1389" y1="${y + 0.5}" y2="${y + 0.5}"/>`).join('');

function candle([dir, ...values], i) {
  const [high, top, bottom, low] = values.map(Number);
  const x = column(i);
  const kind = dir === 'u' ? 'up' : 'down';
  const wick = `<rect class="wick-${kind}" x="${x}" y="${high}" width="1" height="${low - high}"/>`;
  if (kind === 'up') {
    return wick + `<rect class="body-up" x="${x - 3.5}" y="${top + 0.5}" width="8" height="${bottom - top - 1}"/>`;
  }
  return wick + `<rect class="body-down" x="${x - 4}" y="${top}" width="9" height="${bottom - top}"/>`;
}

document.getElementById('price').innerHTML =
  grid([86, 129, 172, 216, 259, 302, 346, 389, 432, 476, 519, 562, 606]) +
  candles.map(candle).join('') +
  `<path class="pointer" d="M1049 43.5h6l-4 3zM1051 44l11 5"/><text x="1063" y="53">27398.68</text>
   <path class="pointer" d="M644 631.5h6l-1-3zM646 631l11-4"/><text x="658" y="631">24680.57</text>`;

document.getElementById('macd-bars').innerHTML =
  grid([0, 36, 71, 106, 141]) +
  bars.map((v, i) => v > 0
    ? `<rect class="bar-up" x="${column(i)}" y="${66 - v}" width="1" height="${v}"/>`
    : `<rect class="bar-down" x="${column(i)}" y="65" width="1" height="${-v}"/>`).join('');
```
